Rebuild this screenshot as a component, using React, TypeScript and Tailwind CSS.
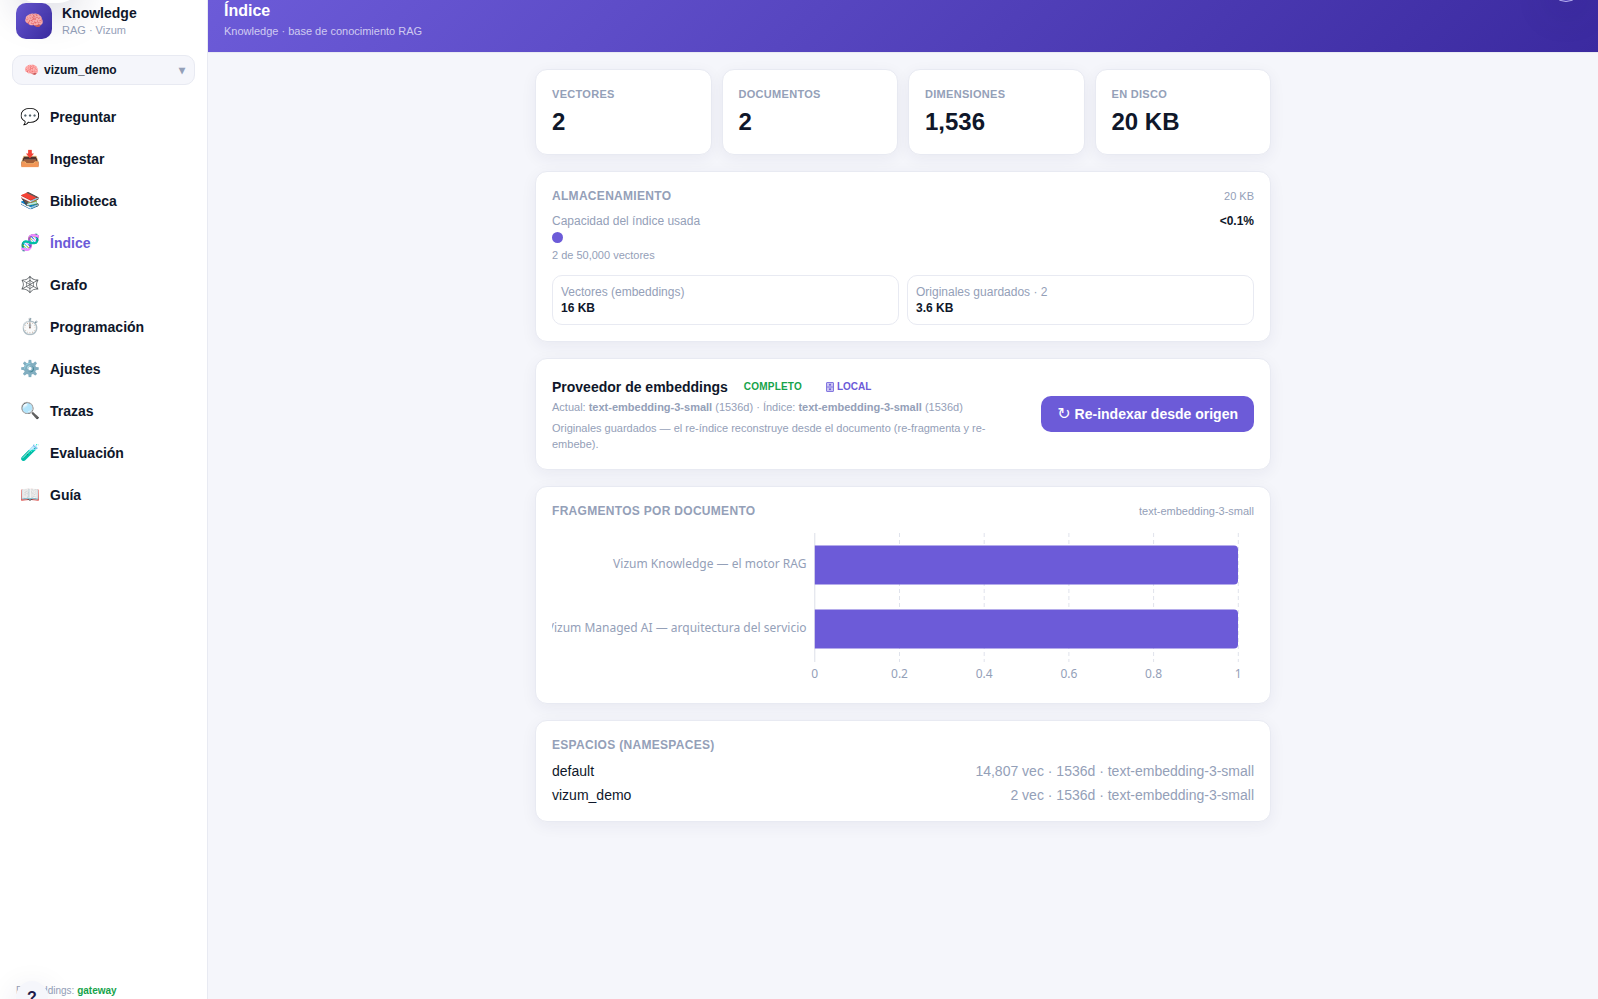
import React from 'react';

const navItems = [
  { icon: '💬', label: 'Preguntar' },
  { icon: '📥', label: 'Ingestar' },
  { icon: '📚', label: 'Biblioteca' },
  { icon: '🧬', label: 'Índice', active: true },
  { icon: '🕸️', label: 'Grafo' },
  { icon: '⏱️', label: 'Programación' },
  { icon: '⚙️', label: 'Ajustes' },
  { icon: '🔍', label: 'Trazas' },
  { icon: '🧪', label: 'Evaluación' },
  { icon: '📖', label: 'Guía' },
];

const stats = [
  { label: 'Vectores', value: '2' },
  { label: 'Documentos', value: '2' },
  { label: 'Dimensiones', value: '1,536' },
  { label: 'En disco', value: '20 KB' },
];

const namespaces = [
  { name: 'default', info: '14,807 vec · 1536d · text-embedding-3-small' },
  { name: 'vizum_demo', info: '2 vec · 1536d · text-embedding-3-small' },
];

const cardClass = 'rounded-xl border border-[#e8eaf2] bg-white shadow-[0_4px_16px_rgba(30,30,80,0.06)]';

const CabinetIcon = () => (
  <svg width={8} height={10} viewBox="0 0 8 10" className="mr-[3px]">
    <rect x={0.5} y={0.5} width={7} height={9} rx={0.5} fill="#c9c3f1" stroke="#8478e0" />
    <line x1={1} x2={7} y1={5} y2={5} stroke="#8478e0" />
    <circle cx={4} cy={2.8} r={1} fill="#6c5bd8" />
    <circle cx={4} cy={7.2} r={1} fill="#6c5bd8" />
  </svg>
);

const FragmentsChart = () => {
  const x0 = 262.8;
  const step = 84.7;
  const ticks = ['0', '0.2', '0.4', '0.6', '0.8', '1'];
  return (
    <svg width={702} height={166} className="mt-[13px] block overflow-hidden" style={{ fontFamily: '"Noto Sans", sans-serif' }}>
      {ticks.slice(1).map((t, i) => (
        <line key={t} x1={x0 + step * (i + 1)} x2={x0 + step * (i + 1)} y1={0} y2={129} stroke="#e0e3ec" strokeDasharray="4 3" />
      ))}
      <line x1={x0} x2={x0} y1={0} y2={129} stroke="#dcdfe8" />
      <path d="M262.8 12.4H682a4 4 0 0 1 4 4V47.6a4 4 0 0 1-4 4H262.8Z" fill="#6c5bd8" />
      <path d="M262.8 76.4H682a4 4 0 0 1 4 4V111.6a4 4 0 0 1-4 4H262.8Z" fill="#6c5bd8" />
      <text x={254.5} y={35} textAnchor="end" fontSize={12} fill="#94a0b8">Vizum Knowledge — el motor RAG</text>
      <text x={254.5} y={99} textAnchor="end" fontSize={12} fill="#94a0b8">Vizum Managed AI — arquitectura del servicio</text>
      {ticks.map((t, i) => (
        <text key={t} x={x0 + step * i} y={145} textAnchor="middle" fontSize={12} fill="#94a0b8">{t}</text>
      ))}
    </svg>
  );
};

export default function App() {
  return (
    <div className="relative flex h-[999px] w-full overflow-hidden bg-[#f5f6fb] font-['Liberation_Sans',sans-serif] text-[#0f172a]">
      <aside className="flex h-full w-[208px] shrink-0 flex-col border-r border-[#e8eaf2] bg-white">
        <div className="flex h-[55px] items-start gap-[10px] pl-4 pt-[3px]">
          <div className="flex h-9 w-9 items-center justify-center rounded-[10px] bg-gradient-to-br from-[#6c5bd8] to-[#3b2aa0] text-base">🧠</div>
          <div>
            <div className="text-sm font-bold leading-[20px]">Knowledge</div>
            <div className="mt-[1px] text-[11px] leading-[13px] text-[#94a0b8]">RAG · Vizum</div>
          </div>
        </div>
        <div className="mx-3 flex h-[30px] items-center rounded-[10px] border border-[#e8eaf2] bg-[#f5f6fb] pl-[11px] pr-[9px] text-xs font-bold">
          <span className="mr-[5px] text-xs">🧠</span>
          <span>vizum_demo</span>
          <span className="ml-auto text-xs text-[#94a0b8]">▾</span>
        </div>
        <nav className="mt-[11px] flex flex-col">
          {navItems.map((item) => (
            <div key={item.label} className={`flex h-[42px] items-center pl-5 text-sm font-bold ${item.active ? 'text-[#6c5bd8]' : 'text-[#0f172a]'}`}>
              <span className="w-[30px] text-base leading-none">{item.icon}</span>
              <span>{item.label}</span>
            </div>
          ))}
        </nav>
        <div className="mt-auto pb-[2px] pl-4 text-[10px] leading-[12px] text-[#94a0b8]">
          Embeddings: <b className="text-[#16a34a]">gateway</b>
        </div>
      </aside>

      <main className="flex min-w-0 flex-1 flex-col">
        <header className="h-[53px] border-b border-[#e8eaf2] bg-[linear-gradient(135deg,#6c5bd8,#3b2aa0)] pl-4 pt-[2px] text-white">
          <div className="text-base font-bold leading-[18px]">Índice</div>
          <div className="mt-[2px] text-[11px] leading-[18px] text-white/70">Knowledge · base de conocimiento RAG</div>
        </header>

        <div className="mx-auto mt-4 flex w-[736px] flex-col gap-4">
          <div className="grid grid-cols-4 gap-[10px]">
            {stats.map((s) => (
              <div key={s.label} className={`${cardClass} h-[86px] px-4 pt-4`}>
                <div className="text-[11px] font-bold uppercase leading-[16px] tracking-[0.3px] text-[#94a0b8]">{s.label}</div>
                <div className="mt-1 text-2xl font-bold leading-[32px]">{s.value}</div>
              </div>
            ))}
          </div>

          <section className={`${cardClass} h-[171px] px-4 pt-4`}>
            <div className="flex items-center justify-between">
              <h3 className="text-xs font-bold uppercase leading-[16px] tracking-[0.3px] text-[#94a0b8]">Almacenamiento</h3>
              <span className="text-[11px] text-[#94a0b8]">20 KB</span>
            </div>
            <div className="mt-2 flex items-center justify-between text-xs leading-[16px]">
              <span className="text-[#94a0b8]">Capacidad del índice usada</span>
              <b>&lt;0.1%</b>
            </div>
            <div className="mt-[3px] h-[11px] w-[11px] rounded-full bg-[#6c5bd8]" />
            <div className="mt-[3px] text-[11px] leading-[18px] text-[#94a0b8]">2 de 50,000 vectores</div>
            <div className="mt-[11px] grid grid-cols-2 gap-2">
              <div className="h-[50px] rounded-[10px] border border-[#e8eaf2] px-2 pt-[8px] text-xs leading-[16px]">
                <div className="text-[#94a0b8]">Vectores (embeddings)</div>
                <b>16 KB</b>
              </div>
              <div className="h-[50px] rounded-[10px] border border-[#e8eaf2] px-2 pt-[8px] text-xs leading-[16px]">
                <div className="text-[#94a0b8]">Originales guardados · 2</div>
                <b>3.6 KB</b>
              </div>
            </div>
          </section>

          <section className={`${cardClass} flex h-[112px] items-center px-4`}>
            <div className="w-[440px]">
              <div className="flex items-center">
                <span className="text-sm font-bold leading-[20px]">Proveedor de embeddings</span>
                <span className="ml-4 text-[10px] font-bold tracking-[0.2px] text-[#16a34a]">COMPLETO</span>
                <span className="ml-6 flex items-center text-[10px] font-bold text-[#6c5bd8]">
                  <CabinetIcon />
                  LOCAL
                </span>
              </div>
              <div className="mt-[1px] text-[11px] leading-[18px] text-[#94a0b8]">
                Actual: <b>text-embedding-3-small</b> (1536d) · Índice: <b>text-embedding-3-small</b> (1536d)
              </div>
              <p className="mt-1 text-[11px] leading-[16px] text-[#94a0b8]">
                Originales guardados — el re-índice reconstruye desde el documento (re-fragmenta y re-embebe).
              </p>
            </div>
            <button className="ml-auto flex h-9 items-center whitespace-pre rounded-[10px] bg-[#6c5bd8] pb-[1px] pl-4 pr-4 text-sm font-bold leading-none text-white">
              <span className="font-['DejaVu_Sans'] text-base font-normal leading-none">↻</span> Re-indexar desde origen
            </button>
          </section>

          <section className={`${cardClass} h-[218px] px-4 pt-4`}>
            <div className="flex items-center justify-between">
              <h3 className="text-xs font-bold uppercase leading-[16px] tracking-[0.3px] text-[#94a0b8]">Fragmentos por documento</h3>
              <span className="text-[11px] text-[#94a0b8]">text-embedding-3-small</span>
            </div>
            <FragmentsChart />
          </section>

          <section className={`${cardClass} h-[102px] px-4 pt-4`}>
            <h3 className="text-xs font-bold uppercase leading-[16px] tracking-[0.3px] text-[#94a0b8]">Espacios (namespaces)</h3>
            <div className="mt-[6px] flex flex-col text-sm leading-[24px]">
              {namespaces.map((n) => (
                <div key={n.name} className="flex justify-between">
                  <span>{n.name}</span>
                  <span className="text-[#94a0b8]">{n.info}</span>
                </div>
              ))}
            </div>
          </section>
        </div>
      </main>

      <div className="absolute left-4 top-[-40px] h-[43px] w-[64px] rounded-full bg-white shadow-[0_10px_40px_rgba(30,30,80,0.18)]" />
      <div className="absolute left-[16px] top-[981px] flex h-[32px] w-[32px] items-start justify-center rounded-full bg-[#f5f6fb] pt-[5px] text-base font-bold text-[#1e1b4b] shadow-[0_8px_32px_rgba(30,30,80,0.12)]">?</div>
      <div className="absolute right-[16px] top-[-30px] h-8 w-8 rounded-full border border-[#b9b0f0] bg-[#4a39b5] shadow-[0_10px_40px_rgba(30,30,80,0.14)]" />
    </div>
  );
}
